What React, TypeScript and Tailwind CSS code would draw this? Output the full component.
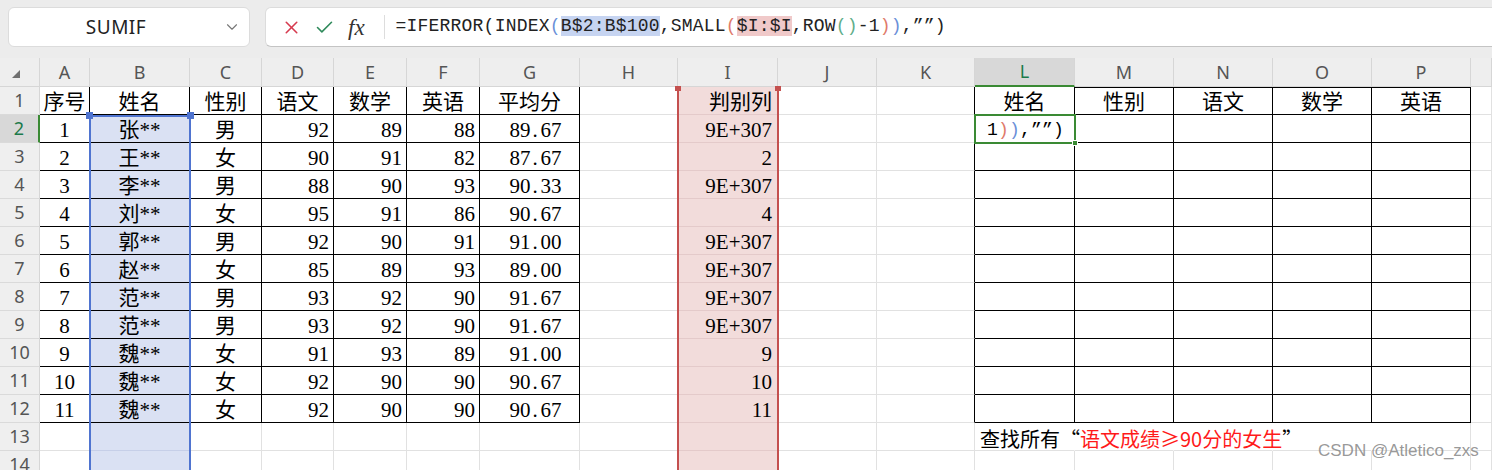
import { X, Check, ChevronDown } from 'lucide-react';
import clsx from 'clsx';

const LETTERS = ['A', 'B', 'C', 'D', 'E', 'F', 'G', 'H', 'I', 'J', 'K', 'L', 'M', 'N', 'O', 'P', ''];

// 序号, 姓名, 性别, 语文, 数学, 英语, 平均分, 判别列
const DATA: string[][] = [
  ['1', '张**', '男', '92', '89', '88', '89.67', '9E+307'],
  ['2', '王**', '女', '90', '91', '82', '87.67', '2'],
  ['3', '李**', '男', '88', '90', '93', '90.33', '9E+307'],
  ['4', '刘**', '女', '95', '91', '86', '90.67', '4'],
  ['5', '郭**', '男', '92', '90', '91', '91.00', '9E+307'],
  ['6', '赵**', '女', '85', '89', '93', '89.00', '9E+307'],
  ['7', '范**', '男', '93', '92', '90', '91.67', '9E+307'],
  ['8', '范**', '男', '93', '92', '90', '91.67', '9E+307'],
  ['9', '魏**', '女', '91', '93', '89', '91.00', '9'],
  ['10', '魏**', '女', '92', '90', '90', '90.67', '10'],
  ['11', '魏**', '女', '92', '90', '90', '90.67', '11'],
];

const HEAD1: Record<number, string> = {
  0: '序号', 1: '姓名', 2: '性别', 3: '语文', 4: '数学', 5: '英语', 6: '平均分',
  8: '判别列', 11: '姓名', 12: '性别', 13: '语文', 14: '数学', 15: '英语',
};

const MONO = "font-['Liberation_Mono',monospace] text-[18px] tracking-[0.2px] text-[#222]";

const FormulaBar = () => (
  <div className="h-[58px] bg-[#ececec] pt-[7px] pl-[8px] flex gap-[15px] items-start overflow-hidden">
    {/* name box */}
    <div className="w-[242px] h-[40px] shrink-0 rounded-[6px] bg-white border border-[#dcdcdc] flex items-center">
      <span className="flex-1 text-center font-['Noto_Sans',sans-serif] text-[19px] tracking-[0.5px] text-[#222]">SUMIF</span>
      <ChevronDown className="w-[18px] h-[18px] text-[#777] mr-[8px]" strokeWidth={1.5} />
    </div>
    {/* formula input */}
    <div className="w-[1240px] h-[40px] shrink-0 rounded-l-[6px] bg-white border border-[#dcdcdc] border-b-[#c4c4c4] flex items-center">
      <X className="w-[21px] h-[21px] text-[#d63a4e] ml-[15px]" strokeWidth={1.8} />
      <Check className="w-[21px] h-[21px] text-[#2f8a5b] ml-[12px]" strokeWidth={1.8} />
      <span className="ml-[13px] font-['Liberation_Serif',serif] italic text-[23px] text-[#333] leading-none">fx</span>
      <span className="ml-[19px] w-px h-[24px] bg-[#dddddd]" />
      <div className={clsx('ml-[11px] whitespace-pre leading-[26px] pb-[2px]', MONO)}>
        <span>=IFERROR(INDEX</span>
        <span className="text-[#6b8fd8]">(</span>
        <span className="bg-[#c6d4f1]">B$2:B$100</span>
        <span>,SMALL</span>
        <span className="text-[#e07a6a]">(</span>
        <span className="bg-[#f0c9c9]">$I:$I</span>
        <span>,ROW</span>
        <span className="text-[#5fae8a]">()</span>
        <span>-1</span>
        <span className="text-[#e07a6a]">)</span>
        <span className="text-[#6b8fd8]">)</span>
        <span>,””)</span>
      </div>
    </div>
  </div>
);

const cellFont = "font-['Liberation_Serif','Noto_Sans_CJK_SC',serif] text-[21px] leading-[27px] text-black";

// decimal numbers: SimSun gives the point a full half-width slot
const Num = ({ v }: { v: string }) => {
  const [a, b] = v.split('.');
  if (b === undefined) return <>{v}</>;
  return (
    <span className="whitespace-nowrap">
      {a}
      <span className="inline-block w-[10px] text-left pl-[2px]">.</span>
      {b}
    </span>
  );
};

const Cell = ({ r, c }: { r: number; c: number }) => {
  const inT1 = r <= 12 && c <= 6;
  const inT2 = r <= 12 && c >= 11 && c <= 15;
  const isB = c === 1 && r >= 2;
  const isI = c === 8;

  let right = 'border-r-[#e1e1e1]';
  if (inT1 || inT2 || (r <= 12 && c === 10)) right = 'border-r-black';
  else if (r === 13 && c >= 11 && c <= 14) right = 'border-r-transparent';
  else if (isB) right = 'border-r-[#c6cfe8]';
  else if (isI) right = 'border-r-[#e4caca]';

  let bottom = 'border-b-[#e1e1e1]';
  if (inT1 || inT2) bottom = 'border-b-black';
  else if (isB) bottom = 'border-b-[#c6cfe8]';
  else if (isI) bottom = 'border-b-[#e4caca]';

  let text: React.ReactNode = null;
  let align = 'justify-center';
  if (r === 1) {
    text = HEAD1[c] ?? null;
    if (c === 8) align = 'justify-end pr-[5px]';
  } else if (r <= 12) {
    const d = DATA[r - 2];
    if (c <= 5) text = d[c];
    if (c === 6) {
      text = <Num v={d[6]} />;
      align = 'justify-center pl-[12px]';
    }
    if (c === 8) text = d[7];
    if (c === 3 || c === 4 || c === 5) align = 'justify-end pr-[4px]';
    if (c === 8) align = 'justify-end pr-[5px]';
  }

  if (r === 2 && c === 11) {
    align = 'justify-start pl-[12px]';
    text = (
      <span className={clsx('whitespace-pre', MONO, 'text-black')}>
        1<span className="text-[#e07a6a]">)</span>
        <span className="text-[#6b8fd8]">)</span>,””)
      </span>
    );
  }

  if (r === 13 && c === 11) {
    align = 'justify-start pl-[5px]';
    text = (
      <span className="whitespace-nowrap font-['Noto_Sans_CJK_SC',sans-serif] text-[20px]">
        查找所有“<span className="text-[#ff1a1a]">语文成绩≥90分的女生</span>”
      </span>
    );
  }

  return (
    <div
      className={clsx(
        'h-[28px] border-r border-b flex items-center pt-[4px] overflow-visible',
        cellFont,
        right,
        bottom,
        align,
        isB && 'bg-[#dae1f3]',
        isI && 'bg-[#f2dcdb]',
        r === 1 && c >= 12 && c <= 15 && 'shadow-[inset_0_1px_0_#000]'
      )}
    >
      {text}
    </div>
  );
};

const Sheet = () => {
  const cells: React.ReactNode[] = [];

  cells.push(
    <div key="corner" className="h-[29px] bg-[#eeeeee] border-r border-b border-[#d6d6d6] flex items-center pl-[12px]">
      <svg width="8" height="8" viewBox="0 0 8 8" className="mt-[4px]">
        <polygon points="8,0 8,8 0,8" fill="#6f6f6f" />
      </svg>
    </div>
  );
  LETTERS.forEach((l, i) =>
    cells.push(
      <div
        key={'h' + i}
        className={clsx(
          "h-[29px] border-r flex items-center justify-center font-['Noto_Sans',sans-serif] text-[18px]",
          l === 'L'
            ? 'bg-[#d8d8d8] text-[#1c7a4b] border-b-2 border-b-[#3a8a34] border-r-[#d6d6d6]'
            : 'bg-[#eeeeee] text-[#555] border-b border-[#d6d6d6]'
        )}
      >
        {l}
      </div>
    )
  );

  for (let r = 1; r <= 14; r++) {
    cells.push(
      <div
        key={'r' + r}
        className={clsx(
          "h-[28px] border-b border-b-[#dadada] flex items-center justify-center font-['Noto_Sans',sans-serif] text-[18px]",
          r === 2
            ? 'bg-[#d8d8d8] text-[#1c7a4b] border-r-2 border-r-[#3a8a34]'
            : 'bg-[#efefef] text-[#555] border-r border-r-[#d6d6d6]'
        )}
      >
        {r}
      </div>
    );
    for (let c = 0; c < LETTERS.length; c++) cells.push(<Cell key={r + '-' + c} r={r} c={c} />);
  }

  return (
    <div className="relative">
      <div className="grid grid-cols-[40px_50px_100px_72px_72px_73px_73px_100px_98px_100px_99px_98px_100px_99px_99px_99px_99px_21px]">
        {cells}
      </div>

      {/* selection of B$2:B$100 */}
      <div className="absolute left-[89px] top-[57px] w-[102px] h-[400px] border-2 border-b-0 border-[#4f74d0]" />
      <div className="absolute left-[86px] top-[54px] w-[7px] h-[7px] bg-[#4f74d0]" />
      <div className="absolute left-[187px] top-[54px] w-[7px] h-[7px] bg-[#4f74d0]" />

      {/* selection of $I:$I */}
      <div className="absolute left-[677px] top-[29px] w-[102px] h-[400px] border-x-2 border-[#c4504f]" />
      <div className="absolute left-[675px] top-[28px] w-[6px] h-[5px] bg-[#c4504f]" />
      <div className="absolute left-[775px] top-[28px] w-[6px] h-[5px] bg-[#c4504f]" />

      {/* active cell L2 */}
      <div className="absolute left-[974px] top-[56px] w-[102px] h-[30px] border-2 border-[#3a8a34]" />
      <div className="absolute left-[1072px] top-[82px] w-[6px] h-[6px] bg-[#3a8a34] border border-white" />
    </div>
  );
};

export default function App() {
  return (
    <div className="w-[1492px] h-[470px] overflow-hidden bg-white relative">
      <FormulaBar />
      <Sheet />
      <div className="absolute left-[1318px] top-[441px] leading-[20px] font-['Liberation_Sans',sans-serif] text-[17px] text-[#8c8c8c]/90 whitespace-nowrap">
        CSDN @Atletico_zxs
      </div>
    </div>
  );
}
